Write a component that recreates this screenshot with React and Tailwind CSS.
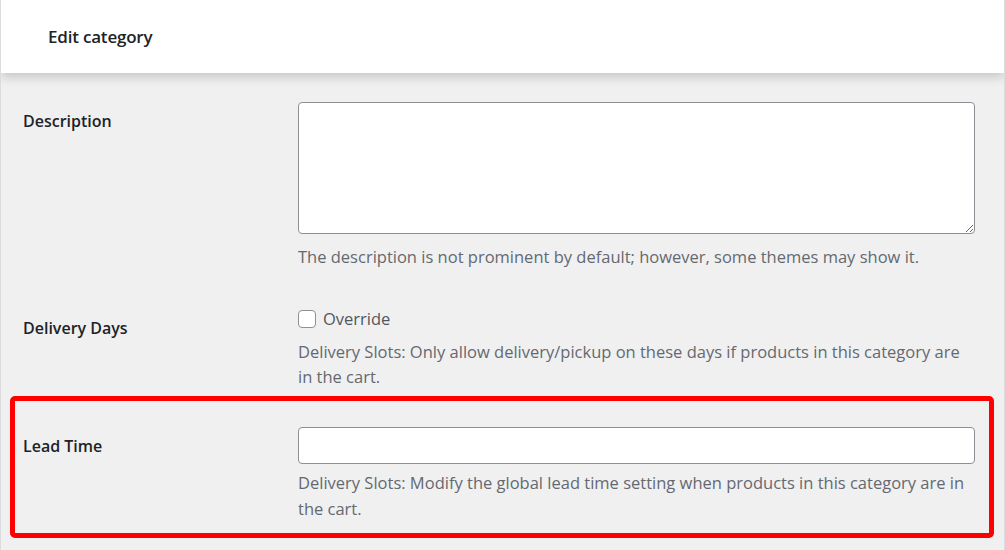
import React from 'react';

function Field({ label, children, labelTop = 'pt-[8px]' }) {
  return (
    <div className="grid grid-cols-[275px_1fr]">
      <div className={`text-[16px] font-semibold text-[#1d2327] ${labelTop}`}>{label}</div>
      <div>{children}</div>
    </div>
  );
}

export default function App() {
  return (
    <div
      className="w-[1005px] h-[550px] bg-[#f0f0f1] border-x border-[#dcdcde] overflow-hidden"
      style={{ fontFamily: '"Open Sans", "Noto Sans", Arial, sans-serif' }}
    >
      <div className="h-[73px] bg-white flex items-center pl-[47px] shadow-[0_4px_10px_rgba(0,0,0,0.18)] relative z-10">
        <h1 className="text-[17px] font-semibold text-[#1d2327] tracking-[-0.2px]">Edit category</h1>
      </div>

      <div className="pl-[22px] pr-[30px] pt-[29px]">
        <Field label="Description" labelTop="pt-[7px]">
          <textarea className="block w-[677px] h-[132px] bg-white border border-[#8c8f94] rounded-[4px] resize-y" />
          <p className="mt-[10px] text-[16.5px] text-[#646970] leading-[26px]">
            The description is not prominent by default; however, some themes may show it.
          </p>
        </Field>

        <div className="mt-[37px]">
          <Field label="Delivery Days" labelTop="pt-[9px]">
            <label className="flex items-center gap-[7px] text-[16.5px] text-[#50575e] leading-[24px]">
              <span className="w-[18px] h-[18px] bg-white border border-[#8c8f94] rounded-[4px]" />
              Override
            </label>
            <p className="mt-[8px] text-[16.5px] text-[#646970] leading-[25px] pr-[8px]">
              Delivery Slots: Only allow delivery/pickup on these days if products in this category are in the cart.
            </p>
          </Field>
        </div>
      </div>

      <div className="ml-[9px] mr-[10px] mt-[7px] border-[5px] border-[#ff0000] rounded-[5px] pl-[8px] pr-[14px] pt-[26px] pb-[11px]">
        <Field label="Lead Time" labelTop="pt-[7px]">
          <input type="text" className="block w-[677px] h-[37px] bg-white border border-[#8c8f94] rounded-[4px]" />
          <p className="mt-[6px] text-[16.5px] text-[#646970] leading-[26px]">
            Delivery Slots: Modify the global lead time setting when products in this category are in the cart.
          </p>
        </Field>
      </div>
      <div className="mt-[12px] border-t border-[#dcdcde]" />
    </div>
  );
}
